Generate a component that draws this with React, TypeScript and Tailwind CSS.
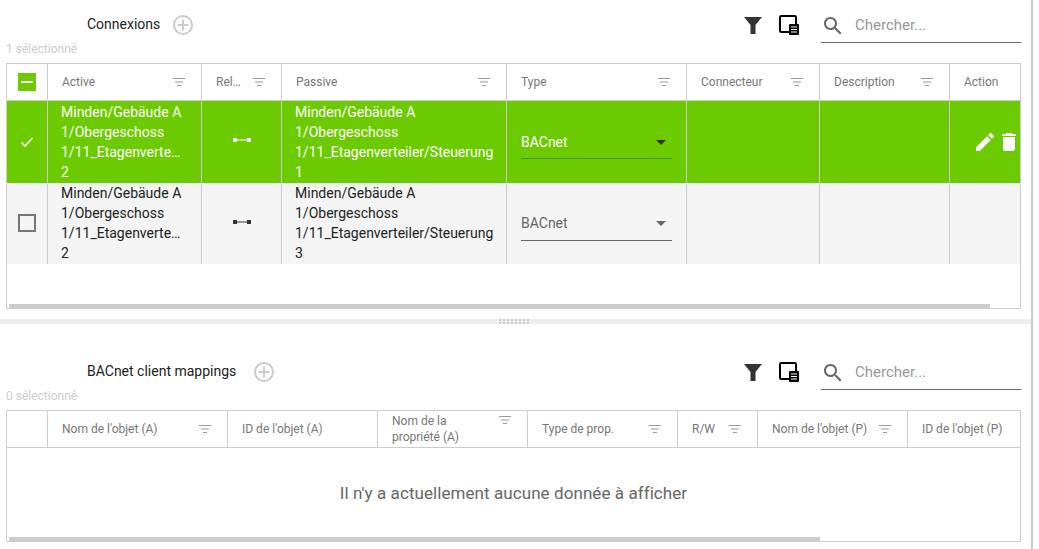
import React from 'react';

const FilterLines = ({ className = '' }: { className?: string }) => (
  <svg width="12" height="9" viewBox="0 0 12 9" className={`shrink-0 ${className}`}>
    <path d="M0 .5h12M2 4h8M4 7.5h4" stroke="#999" strokeWidth="1" fill="none" />
  </svg>
);

const PlusCircle = () => (
  <svg width="20" height="20" viewBox="0 0 20 20">
    <circle cx="10" cy="10" r="9" stroke="#ccc" strokeWidth="2" fill="none" />
    <path d="M10 4.500v11M4.500 10h11" stroke="#ccc" strokeWidth="2" />
  </svg>
);

const Funnel = () => (
  <svg width="18" height="17" viewBox="0 0 18 17">
    <path d="M0 0h18l-6.500 8v9h-5V8z" fill="#333" />
  </svg>
);

const ColumnsIcon = () => (
  <svg width="20" height="20" viewBox="0 0 20 20">
    <path d="M10 17H2a1 1 0 0 1-1-1V2a1 1 0 0 1 1-1h14a1 1 0 0 1 1 1v7" stroke="#000" strokeWidth="2" fill="none" />
    <rect x="10" y="9" width="10" height="11" rx="1" fill="#000" />
    <path d="M12 12h6M12 14.500h6M12 17h6" stroke="#fff" strokeWidth="1" />
  </svg>
);

const SearchIcon = () => (
  <svg width="24" height="24" viewBox="0 0 24 24" fill="#666">
    <path d="M15.500 14h-.79l-.28-.27C15.410 12.590 16 11.110 16 9.500 16 5.910 13.090 3 9.500 3S3 5.910 3 9.500 5.910 16 9.500 16c1.610 0 3.090-.59 4.230-1.570l.27.28v.79l5 4.990L20.490 19l-4.990-5zm-6 0C7.010 14 5 11.990 5 9.500S7.010 5 9.500 5 14 7.010 14 9.500 11.990 14 9.500 14z" />
  </svg>
);

const LinkIcon = ({ color }: { color: string }) => (
  <svg width="18" height="6" viewBox="0 0 18 6" className="mb-[4px]">
    <rect x="0" y="1" width="4" height="4" fill={color} />
    <rect x="14" y="1" width="4" height="4" fill={color} />
    <path d="M4 3h10" stroke={color} strokeWidth="1" />
  </svg>
);

const Toolbar = ({ title, count, top, plusGap }: { title: string; count: string; top: string; plusGap: string }) => (
  <div className={top}>
    <div className="flex items-center h-[34px] pl-[87px] pr-[10px]">
      <span className="text-[14px] text-[#222] mt-[-2px]">{title}</span>
      <span className={`${plusGap} flex`}>
        <PlusCircle />
      </span>
      <div className="ml-auto flex items-center">
        <Funnel />
        <span className="ml-[17px] mr-[22px] flex">
          <ColumnsIcon />
        </span>
        <div className="w-[200px] h-[34px] mt-[2px] flex items-center border-b border-[#666]">
          <SearchIcon />
          <span className="ml-[10px] text-[15px] text-[#999]">Chercher...</span>
        </div>
      </div>
    </div>
    <div className="pl-[6px] mt-[-1px] mb-[7px] h-[15px] flex items-center text-[12px] text-[#ccc]">{count}</div>
  </div>
);

const HeadCell = ({ w, label, filter = true, top = false }: { w: string; label: React.ReactNode; filter?: boolean; top?: boolean }) => (
  <div className={`${w} shrink-0 h-full flex items-center justify-between pl-[14px] pr-[16px] border-r border-[#ccc] last:border-r-0`}>
    <span className="text-[12px] leading-[16px] text-[#777]">{label}</span>
    {filter && <FilterLines className={top ? 'self-start mt-[5px]' : ''} />}
  </div>
);

const BodyCell = ({ w, children, center = false }: { w: string; children?: React.ReactNode; center?: boolean }) => (
  <div className={`${w} shrink-0 h-full flex items-center border-r border-[#ccc] last:border-r-0 ${center ? 'justify-center' : 'pl-[13px]'}`}>
    {children}
  </div>
);

const PathText = ({ third, last, up }: { third: string; last: string; up: boolean }) => (
  <div className={`text-[14px] leading-[20px] whitespace-nowrap ${up ? 'mt-[-2px]' : ''}`}>
    <div>Minden/Gebäude A</div>
    <div>1/Obergeschoss</div>
    <div>{third}</div>
    <div>{last}</div>
  </div>
);

const TypeSelect = ({ selected }: { selected: boolean }) => (
  <div className={`ml-[1px] mb-[2px] w-[151px] h-[36px] flex items-center justify-between pr-[6px] border-b ${selected ? 'pt-[4px] border-[#4d8f00] text-white' : 'pt-[2px] border-[#666] text-[#666]'}`}>
    <span className="text-[14px]">BACnet</span>
    <span className={`w-0 h-0 border-x-[5px] border-x-transparent border-t-[5px] ${selected ? 'border-t-[#333]' : 'border-t-[#666]'}`} />
  </div>
);

const Row = ({ selected, passiveEnd }: { selected: boolean; passiveEnd: string }) => (
  <div className={`flex shrink-0 ${selected ? 'h-[82px] bg-[#6ccb00] text-white' : 'h-[81px] bg-[#f4f4f4] text-[#222]'}`}>
    <BodyCell w="w-[41px]" center>
      {selected ? (
        <svg width="14" height="12" viewBox="0 0 14 12">
          <path d="M1.500 6.500l3.500 3.500 7.500-8" stroke="#fff" strokeWidth="1.600" fill="none" />
        </svg>
      ) : (
        <span className="w-[18px] h-[18px] mt-[-2px] border-2 border-[#777]" />
      )}
    </BodyCell>
    <BodyCell w="w-[154px]">
      <PathText third="1/11_Etagenverte…" last="2" up={!selected} />
    </BodyCell>
    <BodyCell w="w-[80px]" center>
      <LinkIcon color={selected ? '#fff' : '#333'} />
    </BodyCell>
    <BodyCell w="w-[225px]">
      <PathText third="1/11_Etagenverteiler/Steuerung" last={passiveEnd} up={!selected} />
    </BodyCell>
    <BodyCell w="w-[180px]">
      <TypeSelect selected={selected} />
    </BodyCell>
    <BodyCell w="w-[133px]" />
    <BodyCell w="w-[130px]" />
    <div className="flex-1 h-full flex items-center pl-[23px]">
      {selected && (
        <>
          <svg width="24" height="24" viewBox="0 0 24 24" fill="#fff" className="shrink-0">
            <path d="M3 17.250V21h3.750L17.810 9.940l-3.750-3.750L3 17.250zM20.710 7.040c.39-.39.39-1.020 0-1.410l-2.340-2.340c-.39-.39-1.020-.39-1.410 0l-1.830 1.830 3.750 3.750 1.830-1.830z" />
          </svg>
          <svg width="24" height="24" viewBox="0 0 24 24" fill="#fff" className="shrink-0">
            <path d="M6 19c0 1.100.9 2 2 2h8c1.100 0 2-.9 2-2V7H6v12zM19 4h-3.500l-1-1h-5l-1 1H5v2h14V4z" />
          </svg>
        </>
      )}
    </div>
  </div>
);

const Dots = () => (
  <div className="grid grid-cols-[repeat(8,2px)] gap-x-[2px] gap-y-[1px]">
    {Array.from({ length: 16 }).map((_, i) => (
      <span key={i} className="w-[2px] h-[2px] bg-[#ccc]" />
    ))}
  </div>
);

export default function App() {
  return (
    <div className="w-[1039px] h-[549px] overflow-hidden bg-white font-['Roboto',sans-serif]">
      <div className="w-[1033px] h-full border-r-2 border-[#ccc]">
        <section className="h-[319px]">
          <Toolbar title="Connexions" count="1 sélectionné" top="pt-[8px]" plusGap="ml-[13px]" />
          <div className="ml-[6px] w-[1015px] h-[246px] border border-[#ccc] flex flex-col">
            <div className="flex h-[37px] shrink-0 border-b border-[#ccc]">
              <div className="w-[41px] shrink-0 h-full flex items-center justify-center border-r border-[#ccc]">
                <span className="w-[18px] h-[18px] bg-[#6ccb00] flex items-center justify-center">
                  <span className="w-[12px] h-[2px] bg-white" />
                </span>
              </div>
              <HeadCell w="w-[154px]" label="Active" />
              <HeadCell w="w-[80px]" label="Rel…" />
              <HeadCell w="w-[225px]" label="Passive" />
              <HeadCell w="w-[180px]" label="Type" />
              <HeadCell w="w-[133px]" label="Connecteur" />
              <HeadCell w="w-[130px]" label="Description" />
              <HeadCell w="flex-1" label="Action" filter={false} />
            </div>
            <Row selected passiveEnd="1" />
            <Row selected={false} passiveEnd="3" />
            <div className="mt-auto ml-[2px] w-[981px] h-[4px] bg-[#ccc]" />
          </div>
        </section>

        <div className="h-[5px] bg-[#eee] flex items-center justify-center pr-[3px]">
          <Dots />
        </div>

        <section>
          <Toolbar title="BACnet client mappings" count="0 sélectionné" top="pt-[31px]" plusGap="ml-[18px]" />
          <div className="ml-[6px] w-[1015px] h-[132px] border border-[#ccc] flex flex-col">
            <div className="flex h-[37px] shrink-0 border-b border-[#ccc]">
              <div className="w-[41px] shrink-0 h-full border-r border-[#ccc]" />
              <HeadCell w="w-[180px]" label="Nom de l'objet (A)" />
              <HeadCell w="w-[150px]" label="ID de l'objet (A)" filter={false} />
              <HeadCell
                w="w-[150px]"
                top
                label={
                  <>
                    Nom de la
                    <br />
                    propriété (A)
                  </>
                }
              />
              <HeadCell w="w-[150px]" label="Type de prop." />
              <HeadCell w="w-[80px]" label="R/W" />
              <HeadCell w="w-[150px]" label="Nom de l'objet (P)" />
              <HeadCell w="flex-1" label="ID de l'objet (P)" filter={false} />
            </div>
            <div className="flex-1 flex items-center justify-center pt-[2px] text-[17px] tracking-[0.07px] text-[#666]">
              Il n'y a actuellement aucune donnée à afficher
            </div>
            <div className="ml-[2px] w-[811px] h-[4px] bg-[#ccc]" />
          </div>
        </section>
      </div>
    </div>
  );
}
